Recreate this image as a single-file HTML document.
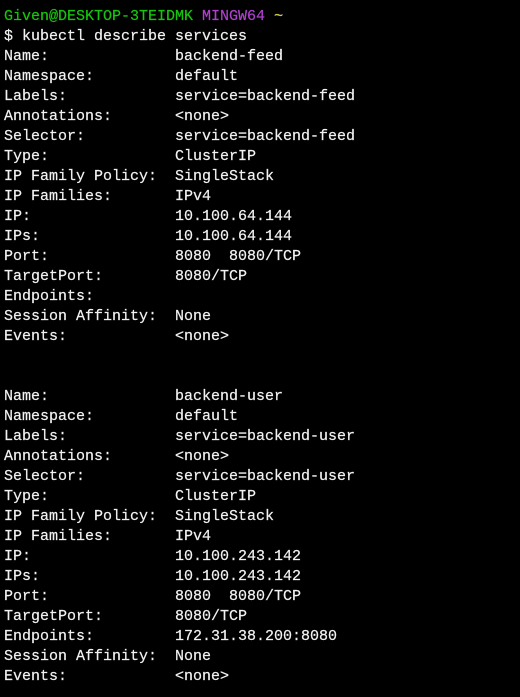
<!DOCTYPE html>
<html><head><style>
html,body{margin:0;padding:0;background:#000;width:520px;height:697px;overflow:hidden}
pre{margin:0;padding:7px 0 0 4px;font-family:"Liberation Mono",monospace;font-size:15px;line-height:20px;color:#f2f2f2;white-space:pre;-webkit-text-stroke:0.2px #f2f2f2}
.g{color:#16c60c;-webkit-text-stroke:0.2px #16c60c}.m{color:#b040d0;-webkit-text-stroke:0.2px #b040d0}.y{color:#c8c000}
</style></head><body><pre><span class="g">Given@DESKTOP-3TEIDMK</span> <span class="m">MINGW64</span> <span class="y">~</span>
$ kubectl describe services
Name:              backend-feed
Namespace:         default
Labels:            service=backend-feed
Annotations:       &lt;none&gt;
Selector:          service=backend-feed
Type:              ClusterIP
IP Family Policy:  SingleStack
IP Families:       IPv4
IP:                10.100.64.144
IPs:               10.100.64.144
Port:              8080  8080/TCP
TargetPort:        8080/TCP
Endpoints:
Session Affinity:  None
Events:            &lt;none&gt;


Name:              backend-user
Namespace:         default
Labels:            service=backend-user
Annotations:       &lt;none&gt;
Selector:          service=backend-user
Type:              ClusterIP
IP Family Policy:  SingleStack
IP Families:       IPv4
IP:                10.100.243.142
IPs:               10.100.243.142
Port:              8080  8080/TCP
TargetPort:        8080/TCP
Endpoints:         172.31.38.200:8080
Session Affinity:  None
Events:            &lt;none&gt;</pre></body></html>
